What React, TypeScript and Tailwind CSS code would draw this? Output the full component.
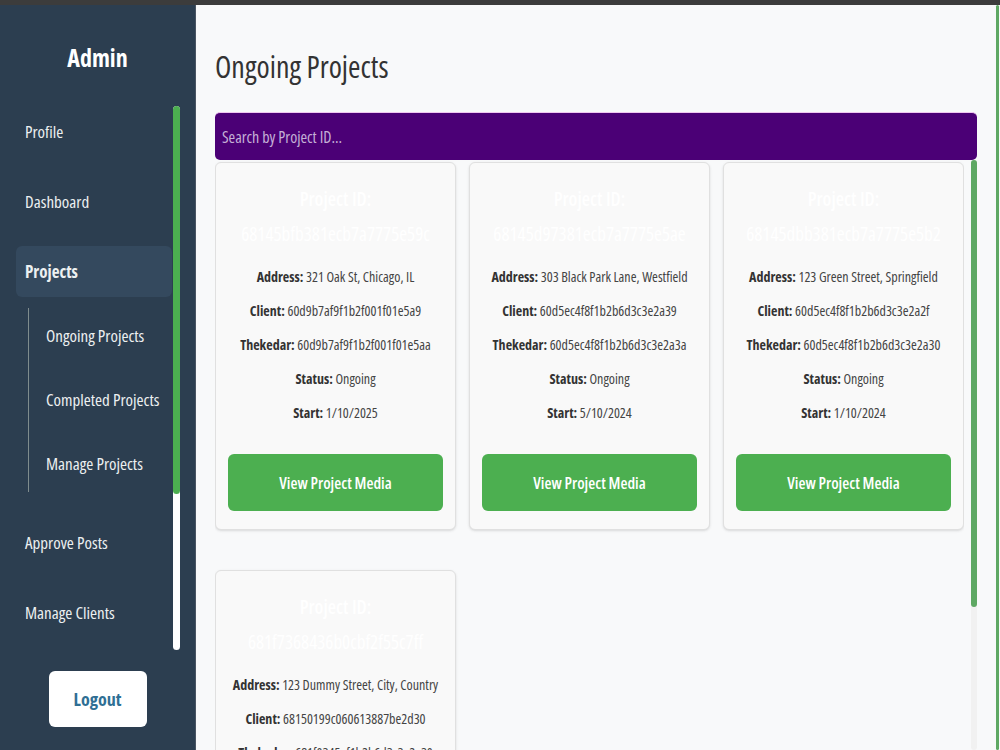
import React from "react";

type Project = {
  id: string;
  address: string;
  client: string;
  thekedar: string;
  status: string;
  start: string;
};

const projects: Project[] = [
  {
    id: "68145bfb381ecb7a7775e59c",
    address: "321 Oak St, Chicago, IL",
    client: "60d9b7af9f1b2f001f01e5a9",
    thekedar: "60d9b7af9f1b2f001f01e5aa",
    status: "Ongoing",
    start: "1/10/2025",
  },
  {
    id: "68145d97381ecb7a7775e5ae",
    address: "303 Black Park Lane, Westfield",
    client: "60d5ec4f8f1b2b6d3c3e2a39",
    thekedar: "60d5ec4f8f1b2b6d3c3e2a3a",
    status: "Ongoing",
    start: "5/10/2024",
  },
  {
    id: "68145dbb381ecb7a7775e5b2",
    address: "123 Green Street, Springfield",
    client: "60d5ec4f8f1b2b6d3c3e2a2f",
    thekedar: "60d5ec4f8f1b2b6d3c3e2a30",
    status: "Ongoing",
    start: "1/10/2024",
  },
  {
    id: "681f7368436b0cbf2f55c7ff",
    address: "123 Dummy Street, City, Country",
    client: "68150199c060613887be2d30",
    thekedar: "681f0345ef1b2b6d3c3e2a30",
    status: "Ongoing",
    start: "2/05/2025",
  },
];

const NavItem: React.FC<{ label: string; active?: boolean; className?: string }> = ({
  label,
  active,
  className = "",
}) => (
  <div
    className={`h-[51px] shrink-0 flex items-center pl-[9px] rounded-md text-[17px] text-[#ecf0f1] ${
      active ? "bg-[#34495e] font-bold" : "font-medium"
    } ${className}`}
  >
    {label}
  </div>
);

const SubItem: React.FC<{ label: string }> = ({ label }) => (
  <div className="h-[56px] flex items-center pl-[17px] text-[17px] font-medium text-[#ecf0f1]">{label}</div>
);

// thin scrollbar look-alike (headless chrome draws no real one)
const ScrollBar: React.FC<{ thumb: string; track: string; color: string; width: string }> = ({
  thumb,
  track,
  color,
  width,
}) => (
  <div className={`${width} ${track} shrink-0 rounded-full`}>
    <div className={`${thumb} ${color} rounded-full`} />
  </div>
);

const Sidebar: React.FC = () => (
  <aside className="w-[195px] shrink-0 bg-[#2c3e50] flex flex-col">
    <h1 className="h-[101px] pt-[4px] flex items-center justify-center text-[24px] font-bold text-white">Admin</h1>

    <div className="ml-4 mr-[15px] h-[544px] flex gap-px">
      <nav className="flex-1 min-w-0 overflow-hidden flex flex-col">
        <NavItem label="Profile" />
        <NavItem label="Dashboard" className="mt-[19px]" />
        <NavItem label="Projects" active className="mt-[19px]" />
        <div className="mt-[11px] ml-3 border-l border-[#7f8c8d] flex flex-col gap-2">
          <SubItem label="Ongoing Projects" />
          <SubItem label="Completed Projects" />
          <SubItem label="Manage Projects" />
        </div>
        <NavItem label="Approve Posts" className="mt-[25px]" />
        <NavItem label="Manage Clients" className="mt-[19px]" />
      </nav>
      <ScrollBar width="w-[7px]" track="bg-white" thumb="h-[388px]" color="bg-[#4caf50]" />
    </div>

    <div className="flex justify-center mt-[21px]">
      <button className="w-[98px] h-[56px] bg-white rounded-md text-[18px] font-bold text-[#2f6f94]">Logout</button>
    </div>
  </aside>
);

const ProjectCard: React.FC<{ p: Project }> = ({ p }) => (
  <div className="bg-[#f9f9f9] border border-[#e0e0e0] rounded-md shadow-sm px-3 pt-[19px] pb-[18px] text-center">
    <h3 className="text-[19px] leading-[35px] font-semibold text-white">
      Project ID:
      <br />
      <span className="font-normal">{p.id}</span>
    </h3>
    <div className="mt-[8px] text-[14px] leading-[34px] text-[#444] whitespace-nowrap">
      <p>
        <span className="font-bold text-[#333]">Address:</span> {p.address}
      </p>
      <p>
        <span className="font-bold text-[#333]">Client:</span> {p.client}
      </p>
      <p>
        <span className="font-bold text-[#333]">Thekedar:</span> {p.thekedar}
      </p>
      <p>
        <span className="font-bold text-[#333]">Status:</span> {p.status}
      </p>
      <p>
        <span className="font-bold text-[#333]">Start:</span> {p.start}
      </p>
    </div>
    <button className="mt-[24px] w-full h-[57px] bg-[#4caf50] rounded-md text-white text-[16px] font-semibold">
      View Project Media
    </button>
  </div>
);

export default function App() {
  return (
    <div className="h-[750px] flex flex-col bg-[#f8f9fa] font-['Open_Sans',sans-serif] [font-stretch:75%] overflow-hidden">
      <div className="h-[5px] shrink-0 bg-[#3c3c3c]" />
      <div className="flex flex-1 min-h-0">
        <Sidebar />
        <main className="flex-1 min-w-0 flex flex-col border-l border-[#4a5563] pl-[19px] pr-[18px]">
          <h2 className="h-[107px] shrink-0 pt-[44px] leading-[36px] text-[30px] font-medium text-[#333]">
            Ongoing Projects
          </h2>
          <input
            placeholder="Search by Project ID..."
            className="h-[48px] shrink-0 w-full bg-[#4b0076] rounded-[5px] px-[7px] text-[16px] text-white placeholder:text-[#c5b0d6] outline-none border-t border-[#f0c8f0]"
          />
          <div className="flex-1 min-h-0 flex gap-[7px]">
            <div className="flex-1 min-w-0 overflow-hidden pt-[2px]">
              <div className="grid grid-cols-3 gap-x-[13px] gap-y-[40px]">
                {projects.map((p) => (
                  <ProjectCard key={p.id} p={p} />
                ))}
              </div>
            </div>
            <ScrollBar width="w-[6px]" track="bg-[#f1f1f1]" thumb="h-[447px]" color="bg-[#5ea863]" />
          </div>
        </main>
        <div className="w-[5px] shrink-0 flex justify-center bg-[#f8f9fa]">
          <div className="w-[3px] bg-[#5ea863] rounded-full" />
        </div>
      </div>
    </div>
  );
}
